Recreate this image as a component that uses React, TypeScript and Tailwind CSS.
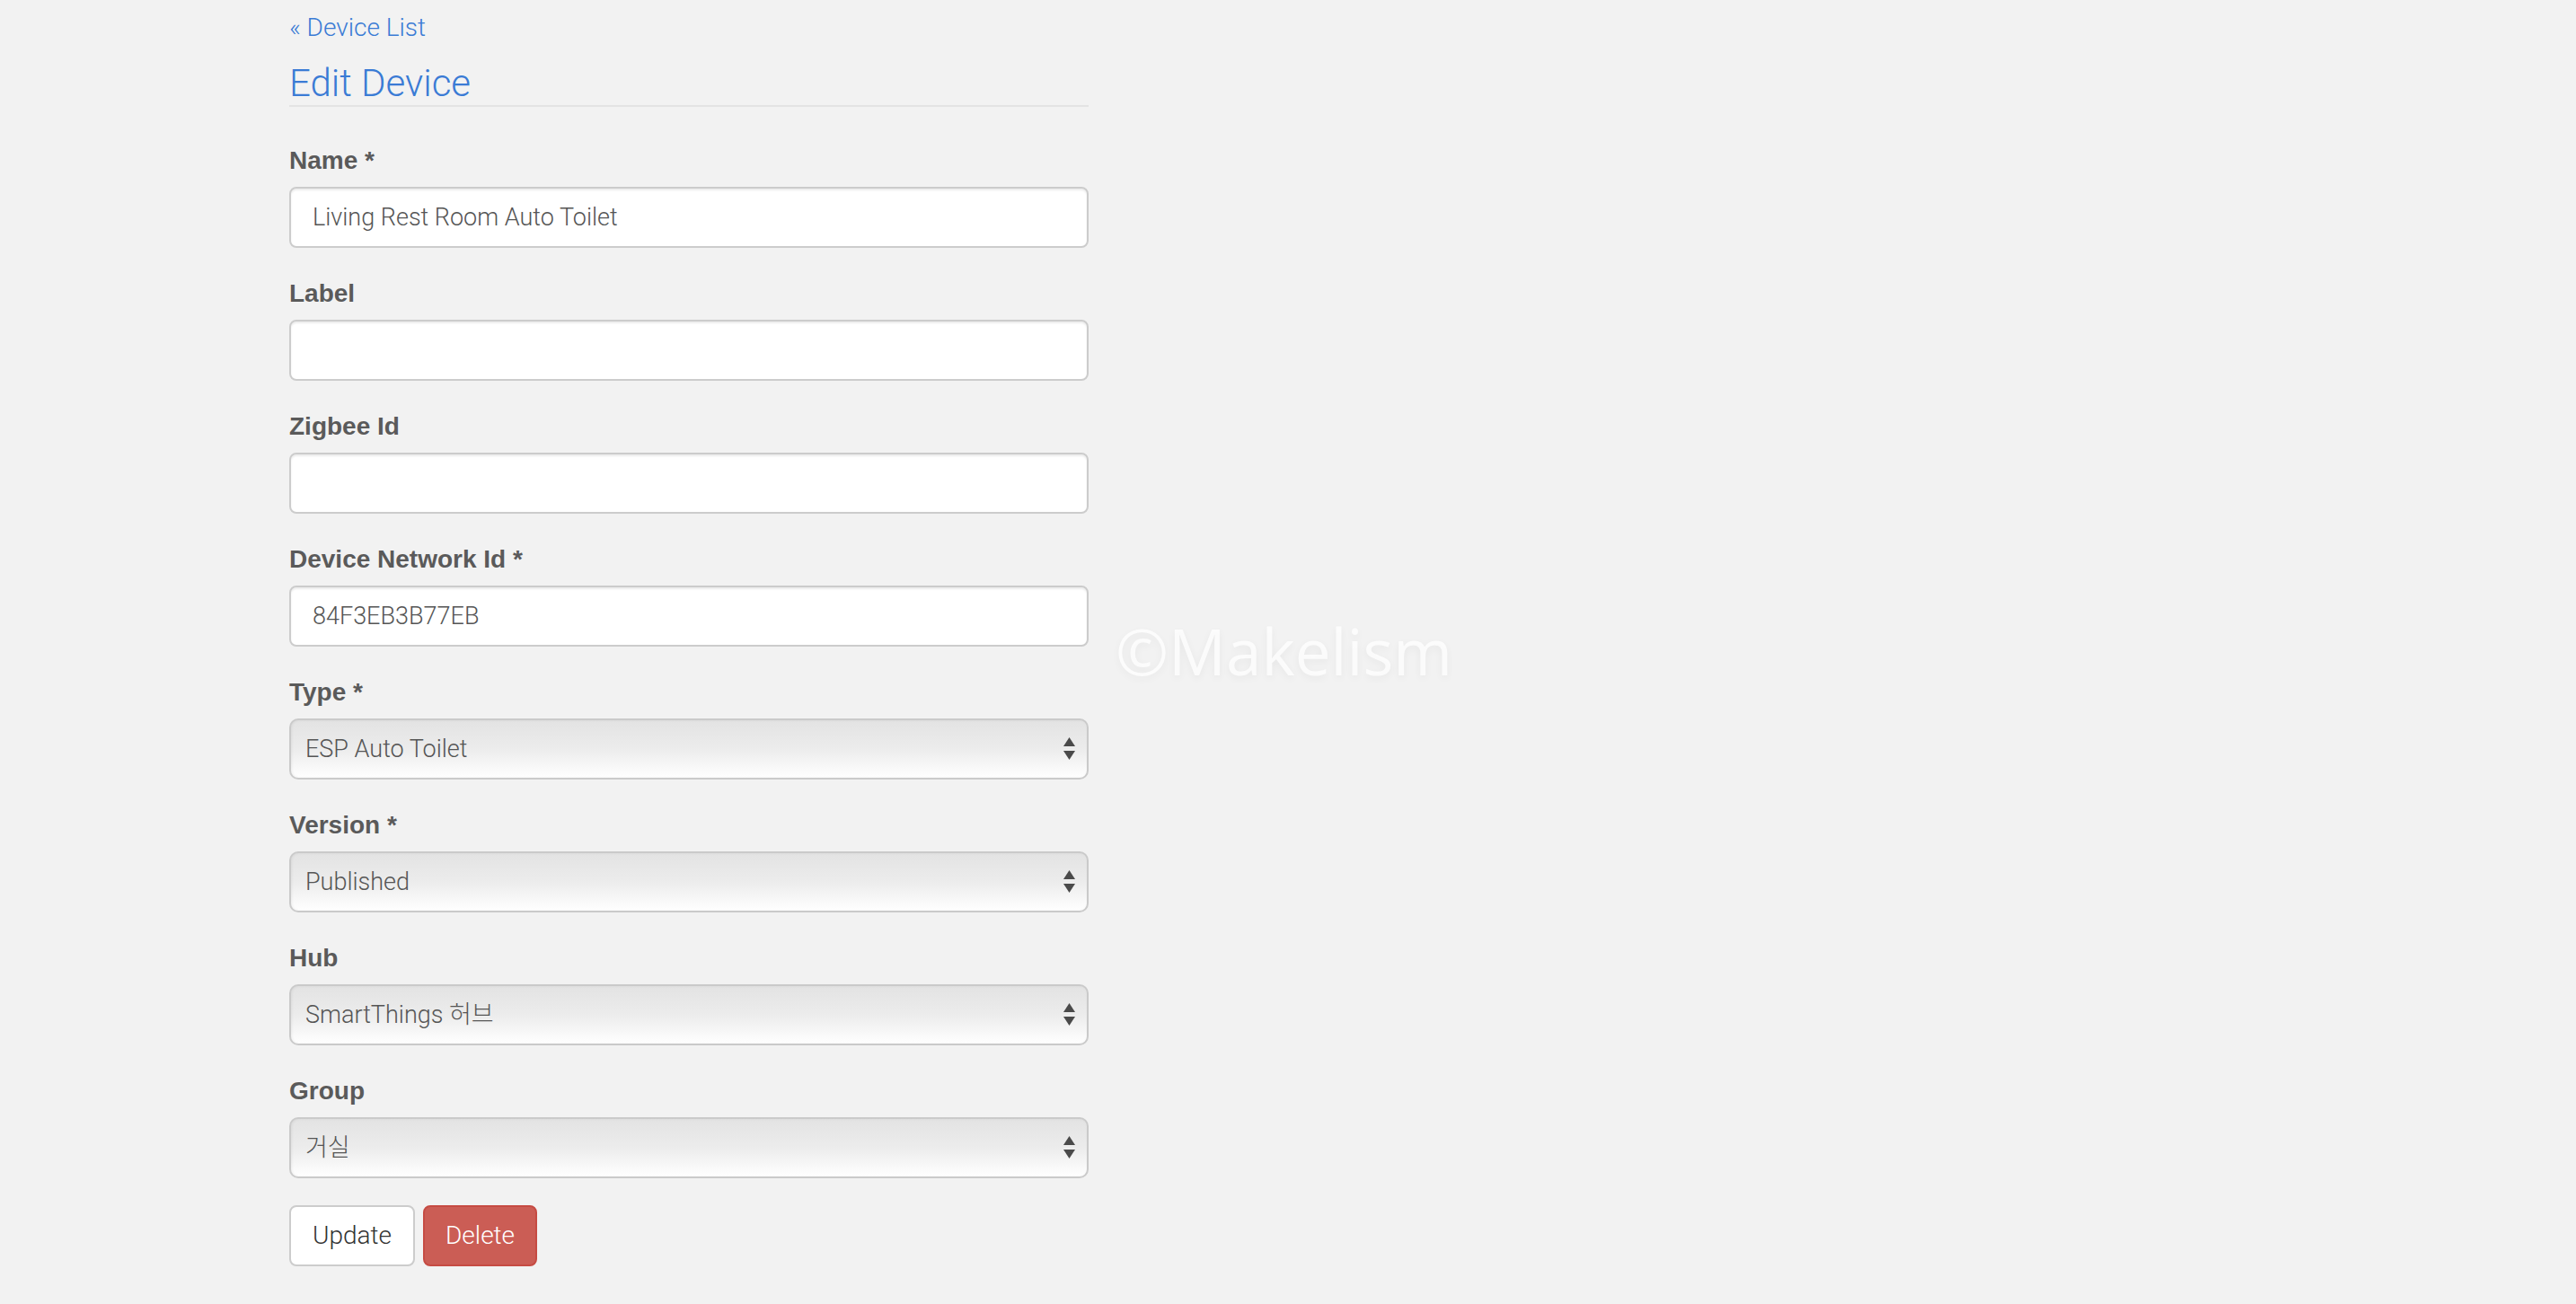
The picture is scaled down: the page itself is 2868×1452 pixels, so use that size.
import React from 'react';

const sans = { fontFamily: 'Roboto, "Noto Sans CJK KR", sans-serif' };

const Label: React.FC<{ children: React.ReactNode }> = ({ children }) => (
  <label
    className="block h-[40px] leading-[40px] text-[28px] font-bold text-[#5a5a5a] mb-[10px] translate-y-[1px]"
    style={{ fontFamily: '"Liberation Sans", Arial, sans-serif' }}
  >
    {children}
  </label>
);

const TextInput: React.FC<{ value: string }> = ({ value }) => (
  <input
    type="text"
    defaultValue={value}
    className="block w-full h-[68px] px-[24px] bg-white border-2 border-[#cccccc] rounded-[8px] text-[27px] font-light text-[#555555] shadow-[inset_0_2px_2px_rgba(0,0,0,0.075)] outline-none"
    style={sans}
  />
);

const SelectBox: React.FC<{ value: string }> = ({ value }) => (
  <div className="flex items-center justify-between h-[68px] pl-[16px] pr-[13px] border-2 border-[#cacaca] rounded-[10px] bg-gradient-to-b from-[#e3e3e3] via-[#ececec] to-white shadow-[inset_1px_0_3px_rgba(0,0,0,0.06)]">
    <span className="text-[27px] font-light text-[#555555]" style={sans}>
      {value}
    </span>
    <svg width="13" height="26" viewBox="0 0 13 26" className="text-[#4a4a4a]">
      <polygon points="6.5,0 13,10 0,10" fill="currentColor" />
      <polygon points="0,15 13,15 6.5,25" fill="currentColor" />
    </svg>
  </div>
);

const Group: React.FC<{ label: string; children: React.ReactNode }> = ({ label, children }) => (
  <div className="mb-[30px]">
    <Label>{label}</Label>
    {children}
  </div>
);

export default function App() {
  return (
    <div className="relative min-h-[1452px] w-full bg-[#f2f2f2] overflow-hidden">
      <div className="w-[890px] ml-[322px] pt-[10px] font-light" style={sans}>
        <a href="#" className="block h-[40px] leading-[40px] text-[28px] text-[#3a7bd5] translate-y-[1px]">
          « Device List
        </a>
        <h3 className="mt-[20px] h-[47px] leading-[46px] text-[42px] text-[#3a7bd5] border-b-2 border-[#e3e3e3] box-content">
          Edit Device
        </h3>
        <div className="mt-[39px]">
          <Group label="Name *">
            <TextInput value="Living Rest Room Auto Toilet" />
          </Group>
          <Group label="Label">
            <TextInput value="" />
          </Group>
          <Group label="Zigbee Id">
            <TextInput value="" />
          </Group>
          <Group label="Device Network Id *">
            <TextInput value="84F3EB3B77EB" />
          </Group>
          <Group label="Type *">
            <SelectBox value="ESP Auto Toilet" />
          </Group>
          <Group label="Version *">
            <SelectBox value="Published" />
          </Group>
          <Group label="Hub">
            <SelectBox value="SmartThings 허브" />
          </Group>
          <Group label="Group">
            <SelectBox value="거실" />
          </Group>
          <div className="flex gap-[9px]">
            <button className="h-[68px] px-[24px] bg-white border-2 border-[#cccccc] rounded-[8px] text-[28px] font-light text-[#333333]">
              Update
            </button>
            <button className="h-[68px] px-[23px] bg-[#cb5d55] border-2 border-[#c64b43] rounded-[8px] text-[28px] font-light text-white">
              Delete
            </button>
          </div>
        </div>
      </div>

      <div
        className="absolute left-[1242px] top-[689px] text-[71px] leading-[72px] text-white/80 [text-shadow:0_3px_8px_rgba(0,0,0,0.05)] select-none pointer-events-none"
        style={{ fontFamily: '"Open Sans", sans-serif' }}
      >
        ©Makelism
      </div>
    </div>
  );
}
